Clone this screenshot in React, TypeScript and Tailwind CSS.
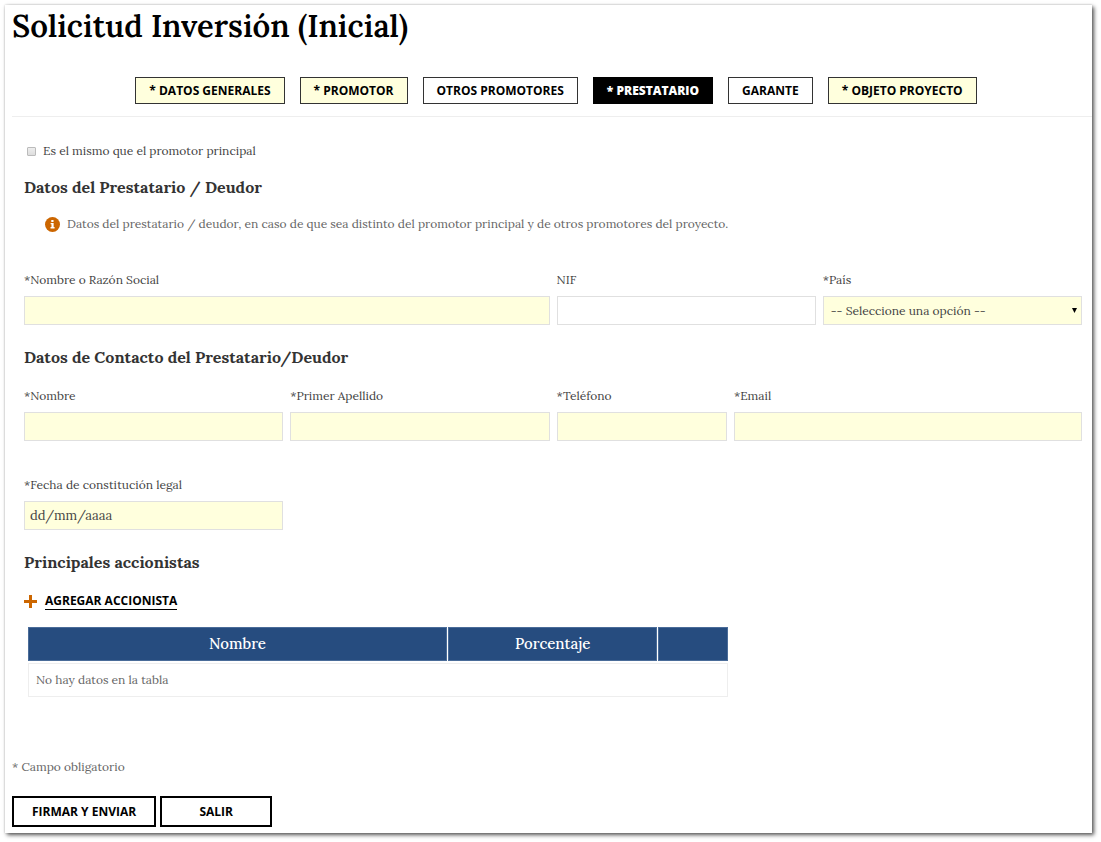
import React, { useState } from 'react';

type Tab = { id: string; label: string; required: boolean };

const TABS: Tab[] = [
  { id: 'generales', label: 'DATOS GENERALES', required: true },
  { id: 'promotor', label: 'PROMOTOR', required: true },
  { id: 'otros', label: 'OTROS PROMOTORES', required: false },
  { id: 'prestatario', label: 'PRESTATARIO', required: true },
  { id: 'garante', label: 'GARANTE', required: false },
  { id: 'objeto', label: 'OBJETO PROYECTO', required: true },
];

const tabStyle = (tab: Tab, active: boolean) => {
  if (active) return 'bg-black border-black text-white font-extrabold';
  if (tab.required) return 'bg-[#ffffdd] border-[#333] text-black font-bold';
  return 'bg-white border-[#333] text-black font-bold';
};

interface FieldProps {
  id: string;
  label: string;
  span: string;
  required?: boolean;
  type?: string;
  placeholder?: string;
}

const Field: React.FC<FieldProps> = ({ id, label, span, required = true, type = 'text', placeholder }) => (
  <div className={`flex flex-col gap-1.5 ${span}`}>
    <label htmlFor={id} className="leading-5">{required ? '*' : ''}{label}</label>
    <input
      id={id}
      type={type}
      placeholder={placeholder}
      className={`h-[29px] w-full min-w-0 border border-[#e0e0e0] px-[5px] text-[13px] placeholder:text-[#444] ${required ? 'bg-[#ffffdd]' : 'bg-white'}`}
    />
  </div>
);

const SectionTitle: React.FC<{ children: React.ReactNode }> = ({ children }) => (
  <h2 className="text-[16px] leading-6 font-bold text-[#333]">{children}</h2>
);

const App: React.FC = () => {
  const [activeTab, setActiveTab] = useState('prestatario');

  return (
    <div className="bg-white pt-[5px] pl-[5px] pr-[9px] pb-[9px] font-['Lora','Liberation_Serif',serif] text-[12px] text-[#444]">
      <div className="bg-white pt-px pl-[7px] pb-1.5 shadow-[2px_2px_4px_#555,0_0_2px_#ccc]">
        <h1 className="text-[31px] leading-10 font-semibold text-black">Solicitud Inversión (Inicial)</h1>

        {/* Pestañas */}
        <nav className="mt-[31px] flex flex-wrap justify-center gap-x-[15px] gap-y-2 border-b border-[#eee] pb-3 pl-2">
          {TABS.map((tab) => (
            <button
              key={tab.id}
              type="button"
              onClick={() => setActiveTab(tab.id)}
              className={`h-[27px] border px-[13px] font-['Open_Sans',sans-serif] text-[12px] leading-4 ${tabStyle(tab, tab.id === activeTab)}`}
            >
              {tab.required ? '* ' : ''}{tab.label}
            </button>
          ))}
        </nav>

        <form onSubmit={(e) => e.preventDefault()}>
          <div className="pt-6 pl-3 pr-[10px]">
            <div className="flex items-center pl-[3px]">
              <input
                id="mismo"
                type="checkbox"
                className="size-[9px] appearance-none rounded-[1px] border border-[#bbb] bg-linear-to-b from-[#eee] to-[#ddd] checked:bg-[#cc6600]"
              />
              <label htmlFor="mismo" className="pl-[7px] leading-5">Es el mismo que el promotor principal</label>
            </div>

            <div className="mt-3.5">
              <SectionTitle>Datos del Prestatario / Deudor</SectionTitle>
            </div>
            <p className="mt-[15px] flex items-center gap-[7px] pl-[21px] leading-5 text-[#666]">
              <svg viewBox="0 0 16 16" className="size-[15px] shrink-0" aria-hidden="true">
                <circle cx="8" cy="8" r="8" fill="#cc6600" />
                <path d="M6.7 3.2h2.4v2H6.7zM6 6.3h3.2v4.4h1v1.5H5.9v-1.5h1V7.8H6z" fill="#fff" />
              </svg>
              Datos del prestatario / deudor, en caso de que sea distinto del promotor principal y de otros promotores del proyecto.
            </p>

            <div className="mt-9 grid grid-cols-12 gap-x-[7px]">
              <Field id="razon" label="Nombre o Razón Social" span="col-span-6" />
              <Field id="nif" label="NIF" span="col-span-3" required={false} />
              <div className="col-span-3 flex flex-col gap-1.5">
                <label htmlFor="pais" className="leading-5">*País</label>
                <div className="relative">
                  <select id="pais" className="block h-[29px] w-full appearance-none border border-[#e0e0e0] bg-[#ffffdd] px-[7px]">
                    <option>-- Seleccione una opción --</option>
                    <option>España</option>
                  </select>
                  <svg viewBox="0 0 5 5" className="pointer-events-none absolute top-3 right-[5px] size-[5px]" aria-hidden="true">
                    <path d="M0 0h5L2.5 5z" fill="#000" />
                  </svg>
                </div>
              </div>
            </div>

            <div className="mt-5">
              <SectionTitle>Datos de Contacto del Prestatario/Deudor</SectionTitle>
            </div>
            <div className="mt-[17px] grid grid-cols-12 gap-x-[7px] gap-y-[34px]">
              <Field id="nombre" label="Nombre" span="col-span-3" />
              <Field id="apellido" label="Primer Apellido" span="col-span-3" />
              <Field id="telefono" label="Teléfono" span="col-span-2" type="tel" />
              <Field id="email" label="Email" span="col-span-4" type="email" />
              <Field id="fecha" label="Fecha de constitución legal" span="col-span-3" placeholder="dd/mm/aaaa" />
            </div>

            <div className="mt-5">
              <SectionTitle>Principales accionistas</SectionTitle>
            </div>
            <div className="mt-[17px] flex h-5 items-center gap-2">
              <svg viewBox="0 0 13 13" className="size-[13px]" aria-hidden="true">
                <path d="M5 0h3v5h5v3H8v5H5V8H0V5h5z" fill="#cc6600" />
              </svg>
              <a href="#accionista" className="border-b border-black font-['Open_Sans',sans-serif] text-[12px] leading-4 font-bold text-black">
                AGREGAR ACCIONISTA
              </a>
            </div>

            <div className="mt-3.5 w-2/3 pl-[3px]">
              <table className="w-full table-fixed border-separate border-spacing-x-px border-spacing-y-0.5">
                <thead>
                  <tr className="h-[34px] text-[15px] text-white">
                    <th className="w-3/5 border border-[#4a6c99] bg-[#264c7f] p-0 font-medium">Nombre</th>
                    <th className="w-3/10 border border-[#4a6c99] bg-[#264c7f] p-0 font-medium">Porcentaje</th>
                    <th className="w-1/10 border border-[#4a6c99] bg-[#264c7f] p-0" />
                  </tr>
                </thead>
                <tbody>
                  <tr className="h-[34px]">
                    <td colSpan={3} className="border border-[#eee] px-[7px] py-0 text-[#666]">No hay datos en la tabla</td>
                  </tr>
                </tbody>
              </table>
            </div>
          </div>

          <p className="mt-[58px] leading-5 text-[#666]">* Campo obligatorio</p>

          <div className="mt-[19px] flex gap-1 font-['Open_Sans',sans-serif] text-[12px] font-bold text-black">
            <button type="submit" className="h-[31px] min-w-28 border-2 border-black bg-white px-[18px]">FIRMAR Y ENVIAR</button>
            <button type="button" className="h-[31px] min-w-28 border-2 border-black bg-white px-[18px]">SALIR</button>
          </div>
        </form>
      </div>
    </div>
  );
};

export default App;
